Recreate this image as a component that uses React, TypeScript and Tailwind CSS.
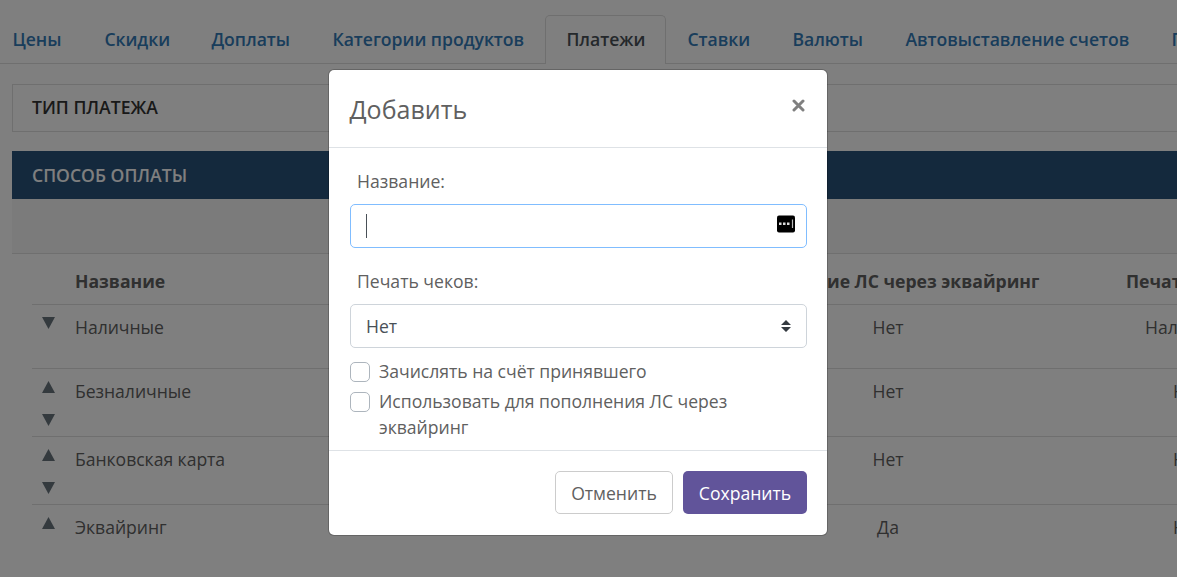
import React from "react";

const tabs = [
  { label: "Цены", width: "w-[92px]" },
  { label: "Скидки", width: "w-[107px]" },
  { label: "Доплаты", width: "w-[121px]" },
  { label: "Категории продуктов", width: "w-[234px]" },
  { label: "Платежи", width: "w-[121px]", active: true },
  { label: "Ставки", width: "w-[105px]" },
  { label: "Валюты", width: "w-[113px]" },
  { label: "Автовыставление счетов", width: "w-[266px]" },
  { label: "Программы", width: "w-[140px]" },
];

const rows = [
  { name: "Наличные", acquiring: "Нет", print: "Наличные", up: false, down: true, height: "h-16" },
  { name: "Безналичные", acquiring: "Нет", print: "Нет", up: true, down: true, height: "h-[68px]" },
  { name: "Банковская карта", acquiring: "Нет", print: "Нет", up: true, down: true, height: "h-[68px]" },
  { name: "Эквайринг", acquiring: "Да", print: "Нет", up: true, down: false, height: "h-[68px]" },
];

const columns = "grid grid-cols-[43px_553px_520px_309px]";

function Arrow({ down = false }: { down?: boolean }) {
  return (
    <svg width="13" height="12" viewBox="0 0 13 12" fill="#68747d">
      <path d={down ? "M0 0h13L6.5 12z" : "M0 12h13L6.5 0z"} />
    </svg>
  );
}

function Checkbox({ children }: { children: React.ReactNode }) {
  return (
    <label className="flex gap-[9px]">
      <span className="mt-1 h-5 w-5 shrink-0 rounded-[5px] border border-[#adb5bd]" />
      <span className="tracking-[-0.02px] leading-[26.4px]">{children}</span>
    </label>
  );
}

function Page() {
  return (
    <div className="w-[1457px]">
      <nav className="flex h-16 items-end border-b border-[#dedede]">
        <div className="-ml-[9px] flex h-[49px] -mb-px shrink-0 font-semibold tracking-[-0.03px]">
          {tabs.map((t) => (
            <div
              key={t.label}
              className={`${t.width} shrink-0 whitespace-nowrap pl-[20.4px] leading-[46px] ${
                t.active
                  ? "rounded-t-[5px] border border-b-0 border-[#dedede] bg-white text-[#495057]"
                  : "border-l border-t border-transparent text-[#337ab7]"
              }`}
            >
              {t.label}
            </div>
          ))}
        </div>
      </nav>
      <div className="mt-5 ml-3 h-12 border border-[#dedede] pl-[19px] font-semibold leading-[45px] text-[#333]">
        ТИП ПЛАТЕЖА
      </div>
      <div className="mt-[19px] ml-3 h-12 bg-[#28527a] pl-5 font-semibold leading-[48px] text-white">
        СПОСОБ ОПЛАТЫ
      </div>
      <div className="ml-3 h-[55px] border-b border-[#dedede] bg-[#f7f7f7]" />
      <div className="ml-8">
        <div className={`${columns} h-[51px] border-b border-[#dedede] font-bold leading-[54px]`}>
          <span />
          <span>Название</span>
          <span className="-ml-px text-center whitespace-nowrap">Пополнение ЛС через эквайринг</span>
          <span className="-ml-[22px] whitespace-nowrap">Печать чеков</span>
        </div>
        {rows.map((r) => (
          <div key={r.name} className={`${columns} ${r.height} border-b border-[#dedede] last:border-b-0`}>
            <div className="flex flex-col gap-[21px] pl-[10px] pt-3">
              {r.up && <Arrow />}
              {r.down && <Arrow down />}
            </div>
            <span className="tracking-[-0.04px] leading-[44px]">{r.name}</span>
            <span className="text-center leading-[44px]">{r.acquiring}</span>
            <span className={`leading-[44px] ${r.print === "Нет" ? "pl-[25px]" : "-ml-[3px]"}`}>{r.print}</span>
          </div>
        ))}
      </div>
    </div>
  );
}

function Dialog() {
  return (
    <div className="flex h-[467px] w-[500px] flex-col rounded-[6px] border border-black/20 bg-white bg-clip-padding text-[#606060]">
      <header className="flex h-[78px] shrink-0 justify-between border-b border-[#dee2e6] px-5">
        <h5 className="pl-[0.5px] text-[25px] leading-[78px]">Добавить</h5>
        <svg className="mt-[29px] mr-[2px]" width="13" height="13" viewBox="0 0 13 13" stroke="#808080" strokeWidth="3" strokeLinecap="round">
          <path d="M2 2l9 9M11 2l-9 9" />
        </svg>
      </header>
      <div className="flex h-[303px] shrink-0 flex-col border-b border-[#dee2e6] pl-[21px] pr-5">
        <span className="mt-5 pl-[7px] leading-[26px]">Название:</span>
        <div className="mt-[10px] flex h-11 shrink-0 items-center justify-between rounded-[5px] border border-[#80bdff] pl-[15px] pr-[11px]">
          <span className="h-6 w-px bg-[#495057]" />
          <svg width="18" height="18" viewBox="0 0 18 18" className="-mt-1">
            <rect width="18" height="17" y="0.5" rx="2" fill="#000" />
            <path d="M2 7.5h2.5v2.5H2zM6 7.5h2.5v2.5H6zM10 7.5h2.5v2.5H10z" fill="#ddd" />
            <path d="M15.5 4.5v8.5" stroke="#bbb" strokeWidth="1.2" />
          </svg>
        </div>
        <span className="mt-5 pl-[7px] leading-[26px]">Печать чеков:</span>
        <div className="mt-[10px] flex h-11 shrink-0 items-center justify-between rounded-[5px] border border-[#ced4da] pl-[15px] pr-[15px] text-[#495057]">
          <span>Нет</span>
          <svg width="10" height="12" viewBox="0 0 10 12" fill="#343a40">
            <path d="M0 5L5 0l5 5zM0 7h10l-5 5z" />
          </svg>
        </div>
        <div className="mt-[10px] flex flex-col gap-[3.6px]">
          <Checkbox>Зачислять на счёт принявшего</Checkbox>
          <Checkbox>
            Использовать для пополнения ЛС через
            <br />
            эквайринг
          </Checkbox>
        </div>
      </div>
      <footer className="flex justify-end gap-[10px] px-5 pt-5">
        <button className="h-[43px] w-[118px] rounded-[5px] border border-[#ccc] pt-[2px]">Отменить</button>
        <button className="h-[43px] w-[124px] rounded-[5px] bg-[#61549a] pt-[2px] text-white">Сохранить</button>
      </footer>
    </div>
  );
}

export default function App() {
  return (
    <div className="relative h-[577px] w-[1177px] overflow-hidden bg-white font-['Open_Sans',sans-serif] text-[17.6px] text-[#606060]">
      <Page />
      <div className="absolute inset-0 bg-black/50 pl-[328px] pt-[69px]">
        <Dialog />
      </div>
    </div>
  );
}
